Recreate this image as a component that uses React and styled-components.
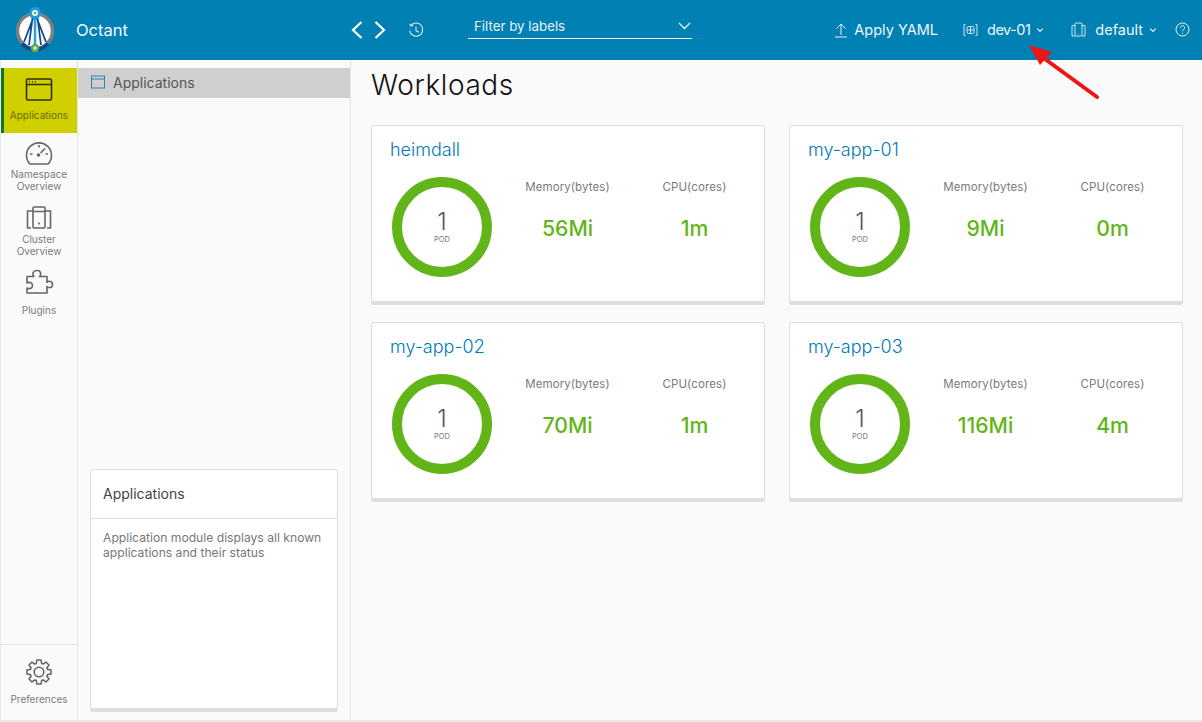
import styled, { createGlobalStyle } from 'styled-components';

const GlobalStyle = createGlobalStyle`
  html, body {
    margin: 0;
    height: 100%;
    background: #fafafa;
    font-family: Inter, 'Noto Sans', sans-serif;
  }
  #root { height: 100%; }
  * { box-sizing: border-box; }
`;

const Page = styled.div`
  position: relative;
  width: 1202px;
  height: 722px;
  overflow: hidden;
  display: flex;
  flex-direction: column;
`;

const Header = styled.header`
  height: 60px;
  flex: none;
  background: #0180b3;
  color: #fff;
  display: flex;
  align-items: center;
  padding-left: 15px;
`;

const Logo = styled.svg`
  width: 40px;
  height: 48px;
  flex: none;
`;

const Brand = styled.div`
  font-size: 16.5px;
  font-weight: 400;
  margin-left: 21px;
  width: 275px;
  color: #f2f8fb;
`;

const NavArrows = styled.div`
  display: flex;
  align-items: center;
  gap: 11px;
  width: 57px;
`;

const HeaderIcon = styled.svg`
  flex: none;
  display: block;
`;

const CaretIcon = styled.svg`
  flex: none;
  display: block;
  margin-left: -3px;
`;

const Filter = styled.div`
  width: 224px;
  height: 23px;
  margin-left: 44px;
  margin-bottom: 6px;
  border-bottom: 1px solid #fff;
  display: flex;
  align-items: center;
  justify-content: space-between;
  padding: 0 1px 2px 6px;
  font-size: 13.3px;
  color: #e6f2f7;
`;

const HeaderRight = styled.div`
  margin-left: auto;
  display: flex;
  align-items: center;
  padding: 0 12px 1px 0;
  font-size: 14.5px;
`;

const HeaderAction = styled.div`
  display: flex;
  align-items: center;
  gap: ${p => p.$gap || 6}px;
  margin-left: ${p => p.$left || 0}px;
  color: #eef6fa;
  white-space: nowrap;
`;

const Tight = styled.span`
  letter-spacing: -0.5px;
`;

const Content = styled.div`
  flex: 1;
  display: flex;
  min-height: 0;
  border-bottom: 2px solid #e8e8e8;
  border-left: 1px solid #e8e8e8;
`;

const Rail = styled.nav`
  width: 77px;
  flex: none;
  border-right: 1px solid #e4e4e4;
  padding-top: 8px;
  display: flex;
  flex-direction: column;
`;

const RailItem = styled.div`
  display: flex;
  flex-direction: column;
  align-items: center;
  height: ${p => p.$height}px;
  padding-top: ${p => p.$top || 7}px;
  padding-right: ${p => (p.$active ? 3 : 0)}px;
  font-size: 10px;
  line-height: 12px;
  text-align: center;
  color: ${p => (p.$active ? '#6b6a00' : '#7a7a7a')};
  background: ${p => (p.$active ? '#d0d000' : 'transparent')};
  border-left: ${p => (p.$active ? '3px solid #0a7a1c' : '0')};
`;

const RailIcon = styled.svg`
  width: 30px;
  height: 30px;
  flex: none;
  margin-bottom: ${p => p.$gap}px;
  fill: none;
  stroke: ${p => p.$color || '#666'};
  stroke-width: 1.6;
`;

const RailSpacer = styled.div`
  flex: 1;
`;

const RailFooter = styled(RailItem)`
  border-top: 1px solid #e4e4e4;
`;

const SidePanel = styled.aside`
  width: 273px;
  flex: none;
  border-right: 1px solid #e4e4e4;
  padding-top: 8px;
  display: flex;
  flex-direction: column;
`;

const SideRow = styled.div`
  height: 30px;
  flex: none;
  background: #cfcfcf;
  display: flex;
  align-items: center;
  gap: 8px;
  padding: 0 0 2px 13px;
  font-size: 14px;
  color: #555;
`;

const HelpCard = styled.section`
  margin: auto 12px 8px;
  height: 243px;
  background: #fff;
  border: 1px solid #dedede;
  border-bottom: 4px solid #dedede;
  border-radius: 3px;
`;

const HelpTitle = styled.div`
  height: 49px;
  padding: 0 12px 2px;
  display: flex;
  align-items: center;
  font-size: 14px;
  color: #444;
  border-bottom: 1px solid #dedede;
`;

const HelpText = styled.p`
  margin: 0;
  padding: 11px 12px 0;
  font-size: 12.15px;
  line-height: 15px;
  color: #777;
  white-space: nowrap;
`;

const Main = styled.main`
  flex: 1;
  padding-left: 20px;
`;

const Title = styled.h1`
  margin: 0;
  height: 65px;
  padding-top: 7px;
  font-size: 28px;
  line-height: 36px;
  font-weight: 300;
  letter-spacing: 0.6px;
  color: #111;
`;

const CardGrid = styled.div`
  display: grid;
  grid-template-columns: 394px 394px;
  grid-auto-rows: 180px;
  column-gap: 24px;
  row-gap: 17px;
`;

const Card = styled.article`
  background: #fff;
  border: 1px solid #dedede;
  border-bottom: 4px solid #dedede;
  border-radius: 3px;
  padding: 13px 0 0 18px;
`;

const CardTitle = styled.div`
  font-size: 18px;
  line-height: 22px;
  font-weight: 300;
  color: #0079b8;
`;

const CardBody = styled.div`
  display: grid;
  grid-template-columns: 114px 127px 127px;
  margin-top: 16px;
`;

const Donut = styled.div`
  width: 100px;
  height: 100px;
  margin-left: 2px;
  border: 10px solid #62b518;
  border-radius: 50%;
  display: flex;
  flex-direction: column;
  align-items: center;
  justify-content: center;
  color: #565656;
`;

const DonutValue = styled.div`
  font-size: 24px;
  line-height: 24px;
  font-weight: 300;
`;

const DonutLabel = styled.div`
  font-size: 7.5px;
  line-height: 9px;
  margin-top: 1px;
  color: #777;
`;

const Stat = styled.div`
  text-align: center;
  white-space: nowrap;
`;

const StatLabel = styled.div`
  font-size: 11.5px;
  line-height: 14px;
  margin-top: 3px;
  letter-spacing: 0.1px;
  color: #7a7a7a;
`;

const StatValue = styled.div`
  font-size: 21.2px;
  line-height: 28px;
  margin-top: 20px;
  font-weight: 500;
  color: #62b518;
`;

const ArrowMark = styled.svg`
  position: absolute;
  left: 1025px;
  top: 40px;
  width: 80px;
  height: 64px;
`;

const workloads = [
  { name: 'heimdall', memory: '56Mi', cpu: '1m' },
  { name: 'my-app-01', memory: '9Mi', cpu: '0m' },
  { name: 'my-app-02', memory: '70Mi', cpu: '1m' },
  { name: 'my-app-03', memory: '116Mi', cpu: '4m' },
];

// eight rounded teeth around the centre of a 30 box
const gearPath = () => {
  const pts = [];
  for (let i = 0; i < 8; i++) {
    const a = (i * Math.PI) / 4 - Math.PI / 2;
    [[-0.3, 9], [-0.17, 12.2], [0.17, 12.2], [0.3, 9]].forEach(([d, r]) => {
      pts.push(`${(15 + r * Math.cos(a + d)).toFixed(2)} ${(15 + r * Math.sin(a + d)).toFixed(2)}`);
    });
  }
  return `M${pts.join('L')}z`;
};

const Caret = () => (
  <CaretIcon width="8" height="8" viewBox="0 0 10 10" fill="none" stroke="currentColor" strokeWidth="1.4">
    <path d="M1.500 3.200 5 6.800l3.500-3.600" />
  </CaretIcon>
);

const App = () => (
  <Page>
    <GlobalStyle />
    <Header>
      <Logo viewBox="0 0 40 48">
        <circle cx="20" cy="25" r="17.500" fill="#fff" stroke="#7f7f7f" strokeWidth="3.500" />
        <path d="M7 37.500a17.500 17.500 0 0 0 26 0" fill="none" stroke="#134a8e" strokeWidth="3.500" />
        <path d="M19 10 9 36M21 10l10 26M17.500 12 14 39M22.500 12 26 39" stroke="#134a8e" strokeWidth="1.800" fill="none" />
        <path d="M20 10v30" stroke="#2a9fe0" strokeWidth="2.500" />
        <circle cx="20" cy="7" r="6" fill="#1b9ce2" />
        <circle cx="20" cy="7" r="3" fill="#fff" />
        <circle cx="20" cy="7" r="1.500" fill="#6cc04a" />
        <circle cx="20" cy="42" r="4.200" fill="#5fb14f" />
        <circle cx="20" cy="42" r="1.500" fill="#fff" />
      </Logo>
      <Brand>Octant</Brand>
      <NavArrows>
        <HeaderIcon width="12" height="18" viewBox="0 0 12 18" fill="none" stroke="#fff" strokeWidth="2.200">
          <path d="M10.500 1 2 9l8.500 8" />
        </HeaderIcon>
        <HeaderIcon width="12" height="18" viewBox="0 0 12 18" fill="none" stroke="#fff" strokeWidth="2.200">
          <path d="M1.500 1 10 9l-8.500 8" />
        </HeaderIcon>
      </NavArrows>
      <HeaderIcon width="16" height="16" viewBox="0 0 16 16" fill="none" stroke="#d5e9f2" strokeWidth="1.100">
        <path d="M3.200 3.200A6.600 6.600 0 1 1 1.600 8.600" />
        <path d="M1.600 1.800l1.400 2.200 2.400-.8" />
        <path d="M8 4.600V8.600l2.800 1.600" />
      </HeaderIcon>
      <Filter>
        Filter by labels
        <HeaderIcon width="13" height="8" viewBox="0 0 13 8" fill="none" stroke="#e6f2f7" strokeWidth="1.300">
          <path d="M1 1l5.500 5.500L12 1" />
        </HeaderIcon>
      </Filter>
      <HeaderRight>
        <HeaderAction>
          <HeaderIcon width="14" height="16" viewBox="0 0 14 16" fill="none" stroke="#e6f2f7" strokeWidth="1">
            <path d="M7 13V2M2.500 6.500 7 2l4.500 4.500M1 15h12" />
          </HeaderIcon>
          Apply YAML
        </HeaderAction>
        <HeaderAction $left={25} $gap={9}>
          <HeaderIcon width="15" height="14" viewBox="0 0 15 14" fill="none" stroke="#cfe5ef" strokeWidth="1">
            <path d="M2.500 1.500H1v11h1.500M12.500 1.500H14v11h-1.500" />
            <rect x="4" y="3.500" width="7" height="7" rx="1.500" />
            <path d="M7.500 3.500v7M4 7h7" />
          </HeaderIcon>
          <Tight>dev-01</Tight>
          <Caret />
        </HeaderAction>
        <HeaderAction $left={27} $gap={9}>
          <HeaderIcon width="15" height="16" viewBox="0 0 15 16" fill="none" stroke="#cfe5ef" strokeWidth="1">
            <rect x="4" y="1" width="7" height="13" rx="1" />
            <path d="M4 3.500H1v10.500h3M11 3.500h3v10.500h-3M7.500 11.500v.5" />
          </HeaderIcon>
          default
          <Caret />
        </HeaderAction>
        <HeaderAction $left={18}>
          <HeaderIcon width="15" height="15" viewBox="0 0 15 15" fill="none" stroke="#e6f2f7" strokeWidth="1">
            <circle cx="7.500" cy="7.500" r="6.500" />
            <path d="M5.400 5.800a2.100 2.100 0 1 1 3.200 1.800c-.7.400-1.100.8-1.100 1.600M7.500 10.600v1" />
          </HeaderIcon>
        </HeaderAction>
      </HeaderRight>
    </Header>
    <Content>
      <Rail>
        <RailItem $active $height={65} $top={7}>
          <RailIcon $color="#2f2f00" viewBox="0 0 30 30" $gap={4}>
            <rect x="2.500" y="4" width="25" height="21" rx="1.500" />
            <path d="M2.500 9.500h25M5 6.800h1M8 6.800h1M11 6.800h1" />
          </RailIcon>
          Applications
        </RailItem>
        <RailItem $height={65} $top={6}>
          <RailIcon viewBox="0 0 30 30" $gap={-1}>
            <path d="M6 25a12.500 12.500 0 1 1 18 0z" strokeLinejoin="round" />
            <path d="M15 6v2.500M6 15h2.500M21.500 15H24M21 9.500 16.500 14" />
            <circle cx="14.500" cy="16" r="1.800" fill="#666" stroke="none" />
          </RailIcon>
          Namespace
          <br />
          Overview
        </RailItem>
        <RailItem $height={65} $top={6}>
          <RailIcon viewBox="0 0 30 30" $gap={-1}>
            <rect x="9" y="3" width="12" height="21" rx="1" />
            <path d="M9 7.500h12M9 7H3.500v17H7M21 7h5.500v17H23" />
            <circle cx="15" cy="19.500" r="1" fill="#666" stroke="none" />
          </RailIcon>
          Cluster
          <br />
          Overview
        </RailItem>
        <RailItem $height={65} $top={4}>
          <RailIcon viewBox="0 0 30 30" $gap={7}>
            <path
              d="M3 9.500h7c-2-2-1.500-5.500 2.500-6S18 7 15.500 9.500H23v6c2-2 5.500-1.500 5.500 2s-3.500 4-5.500 2v6.500H3v-5c3 1.500 5.500 0 5.500-2.500S6 14.500 3 16z"
              strokeLinejoin="round"
            />
          </RailIcon>
          Plugins
        </RailItem>
        <RailSpacer />
        <RailFooter $height={76} $top={12}>
          <RailIcon viewBox="0 0 30 30" $gap={6}>
            <circle cx="15" cy="15" r="4.800" />
            <path d={gearPath()} strokeLinejoin="round" />
          </RailIcon>
          Preferences
        </RailFooter>
      </Rail>
      <SidePanel>
        <SideRow>
          <HeaderIcon width="14" height="14" viewBox="0 0 14 14" fill="none" stroke="#2f82ad" strokeWidth="1">
            <rect x="0.500" y="1" width="13" height="12" />
            <path d="M0.500 4h13" />
          </HeaderIcon>
          Applications
        </SideRow>
        <HelpCard>
          <HelpTitle>Applications</HelpTitle>
          <HelpText>
            Application module displays all known
            <br />
            applications and their status
          </HelpText>
        </HelpCard>
      </SidePanel>
      <Main>
        <Title>Workloads</Title>
        <CardGrid>
          {workloads.map(w => (
            <Card key={w.name}>
              <CardTitle>{w.name}</CardTitle>
              <CardBody>
                <Donut>
                  <DonutValue>1</DonutValue>
                  <DonutLabel>POD</DonutLabel>
                </Donut>
                <Stat>
                  <StatLabel>Memory(bytes)</StatLabel>
                  <StatValue>{w.memory}</StatValue>
                </Stat>
                <Stat>
                  <StatLabel>CPU(cores)</StatLabel>
                  <StatValue>{w.cpu}</StatValue>
                </Stat>
              </CardBody>
            </Card>
          ))}
        </CardGrid>
      </Main>
    </Content>
    <ArrowMark viewBox="0 0 80 64">
      <path d="M72 57 20 19" stroke="#f01414" strokeWidth="4" strokeLinecap="round" />
      <path d="M4 5l23 7-12 13z" fill="#f01414" />
    </ArrowMark>
  </Page>
);

export default App;
